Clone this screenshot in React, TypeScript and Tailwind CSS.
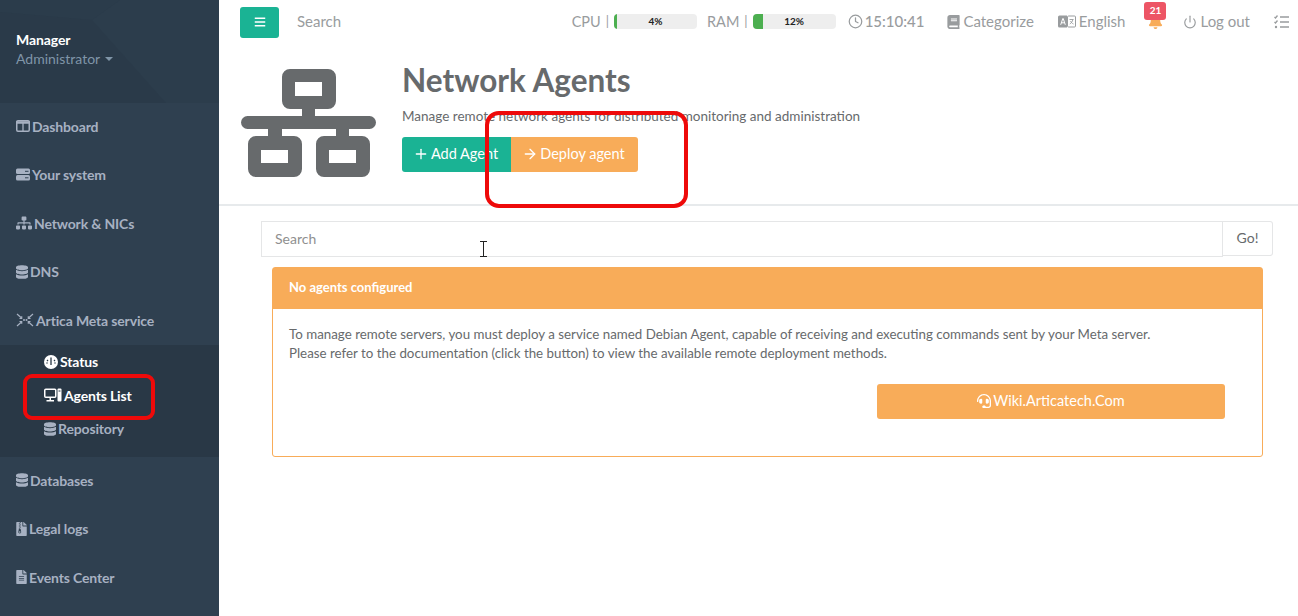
import React from "react";
import { FaDatabase, FaFileArchive, FaFileAlt, FaBook, FaBell, FaBars, FaSitemap, FaHeadset } from "react-icons/fa";
import { FiClock, FiPower } from "react-icons/fi";
import { LuPlus, LuArrowRight } from "react-icons/lu";

function NavItem({ icon, label }: { icon: React.ReactNode; label: string }) {
  return (
    <div className="h-[48.4px] pl-4 pb-[1.5px] flex items-center gap-[2px] text-[14px] font-bold text-[#a7b1c2] whitespace-nowrap tracking-[-0.15px]">
      {icon}
      <span>{label}</span>
    </div>
  );
}

function SubItem({ icon, label, active }: { icon: React.ReactNode; label: string; active?: boolean }) {
  return (
    <div className={`h-[33.5px] pl-[44px] flex items-center gap-[2px] text-[14px] font-bold whitespace-nowrap tracking-[-0.15px] ${active ? "text-white" : "text-[#a7b1c2]"}`}>
      {icon}
      <span>{label}</span>
    </div>
  );
}

function Meter({ value }: { value: number }) {
  return (
    <div className="relative w-[83px] h-[15px] rounded bg-[#eeeeee] overflow-hidden">
      <div className="absolute left-0 top-0 bottom-0 bg-[#4caf50]" style={{ width: `${value}%` }} />
      <div className="absolute inset-0 flex items-center justify-center text-[10px] font-bold text-[#222]">{value}%</div>
    </div>
  );
}

function NetworkIcon() {
  return (
    <svg width="135" height="108" viewBox="0 0 135 108" className="block" fill="#676a6c">
      <rect x="0" y="47" width="135" height="13" rx="6.5" />
      <rect x="61" y="38" width="13" height="10" />
      <rect x="27" y="59" width="14" height="10" />
      <rect x="95" y="59" width="13" height="10" />
      <path fillRule="evenodd" d="M49 0h38a8 8 0 0 1 8 8v24a8 8 0 0 1-8 8H49a8 8 0 0 1-8-8V8a8 8 0 0 1 8-8zM54 13v14h27V13z" />
      <path fillRule="evenodd" d="M15 67h38a8 8 0 0 1 8 8v25a8 8 0 0 1-8 8H15a8 8 0 0 1-8-8V75a8 8 0 0 1 8-8zM20 81v13h27V81z" />
      <path fillRule="evenodd" d="M83 67h38a8 8 0 0 1 8 8v25a8 8 0 0 1-8 8H83a8 8 0 0 1-8-8V75a8 8 0 0 1 8-8zM88 81v13h27V81z" />
    </svg>
  );
}

const DashIcon = () => (
  <svg width="14" height="12" viewBox="0 0 14 12" fill="none" stroke="currentColor" className="shrink-0">
    <rect x="0.75" y="0.75" width="12.5" height="10.5" rx="1.200" strokeWidth="1.500" />
    <path d="M0 2.500h14" strokeWidth="2.500" />
    <path d="M7 3v8" strokeWidth="1.300" />
  </svg>
);

const ServerIcon = () => (
  <svg width="14" height="13" viewBox="0 0 14 13" className="shrink-0">
    <rect x="0" y="0.500" width="14" height="5.500" rx="1.500" fill="currentColor" />
    <rect x="0" y="7" width="14" height="5.500" rx="1.500" fill="currentColor" />
    <path d="M9 3.300h3.500M9 9.800h3.500" stroke="#2f4050" strokeWidth="1" />
  </svg>
);

const MetaIcon = () => (
  <svg width="18" height="14" viewBox="0 0 18 14" fill="none" stroke="currentColor" strokeWidth="1.200" className="shrink-0">
    <path d="M1 1l4.500 4M1 13l4.500-4M17 1l-4.500 4M17 13l-4.500-4" />
    <path d="M3.500 5.500h2.200V3.300M3.500 8.500h2.200v2.200M14.500 5.500h-2.200V3.300M14.500 8.500h-2.200v2.200" />
    <circle cx="8" cy="7" r="1" fill="currentColor" stroke="none" />
    <circle cx="10.500" cy="7" r="1" fill="currentColor" stroke="none" />
  </svg>
);

const GaugeIcon = () => (
  <svg width="14" height="14" viewBox="0 0 14 14" className="shrink-0">
    <circle cx="7" cy="7" r="7" fill="currentColor" />
    <path d="M7 2.500v7.500M3 5l1 1M11 5l-1 1M2.500 8h1M10.500 8h1" stroke="#293846" strokeWidth="1.300" />
  </svg>
);

const AgentIcon = () => (
  <svg width="18" height="14" viewBox="0 0 18 14" fill="none" stroke="currentColor" strokeWidth="1.500" className="shrink-0">
    <rect x="0.750" y="1.250" width="11" height="8" rx="1" />
    <path d="M6.250 9.500v2.500M2.500 12.750h7.500" />
    <rect x="13.500" y="0.500" width="4" height="13" rx="1" fill="currentColor" stroke="none" />
    <path d="M14.500 3h2" stroke="#293846" strokeWidth="1" />
  </svg>
);

const TranslateIcon = () => (
  <svg width="18" height="13" viewBox="0 0 18 13" className="shrink-0">
    <path d="M1.500 0.500H9v12H1.500a1.500 1.500 0 0 1-1.500-1.500V2a1.500 1.500 0 0 1 1.500-1.500z" fill="currentColor" />
    <path d="M2.700 9.800L4.800 3.500h.4l2.100 6.300M3.500 7.800h3" stroke="#fff" strokeWidth="1" fill="none" />
    <rect x="9.500" y="1" width="8" height="11" rx="1" fill="#fff" stroke="currentColor" />
    <path d="M11.500 4.500h4M14.800 4.500c-.3 2-1.500 3.500-3 4.500M12.500 6c.6 1.300 1.500 2.300 3 3" stroke="currentColor" strokeWidth="0.900" fill="none" />
  </svg>
);

const TasksIcon = () => (
  <svg width="15" height="14" viewBox="0 0 15 14" fill="none" stroke="currentColor" strokeWidth="1.300" className="shrink-0">
    <path d="M6 2h9M6 7h9M6 12h9" />
    <path d="M0.500 2l1 1 2-2.500M0.500 7l1 1 2-2.500" />
    <circle cx="2" cy="12" r="1.200" fill="currentColor" stroke="none" />
  </svg>
);

export default function App() {
  return (
    <div className="relative flex w-[1298px] h-[616px] overflow-hidden bg-white text-[#676a6c] font-['Lato','Open_Sans',sans-serif]">
      <aside className="w-[219px] shrink-0 bg-[#2f4050] flex flex-col">
        <div className="relative h-[103px] bg-[#2a3a49] pl-4 pt-[30px] overflow-hidden">
          <svg className="absolute inset-0" width="219" height="103" viewBox="0 0 219 103">
            <polygon points="92,20 120,0 219,0 219,103 166,103" fill="#2c3d4c" />
            <polygon points="0,0 120,0 92,20 0,12" fill="#2b3c4b" />
          </svg>
          <div className="relative text-[14px] leading-[19px] font-bold text-white tracking-[-0.1px]">Manager</div>
          <div className="relative flex items-center gap-[5px] text-[14px] leading-[19px] text-[#8095a8]">
            Administrator
            <span className="mt-[1px] w-0 h-0 border-x-[4px] border-x-transparent border-t-[4px] border-t-[#8095a8]" />
          </div>
        </div>
        <nav>
          <NavItem icon={<DashIcon />} label="Dashboard" />
          <NavItem icon={<ServerIcon />} label="Your system" />
          <NavItem icon={<FaSitemap className="w-[16px] h-[14px]" />} label="Network & NICs" />
          <NavItem icon={<FaDatabase className="w-[12px] h-[14px]" />} label="DNS" />
          <NavItem icon={<MetaIcon />} label="Artica Meta service" />
          <div className="bg-[#293846] pb-[11.500px]">
            <SubItem active icon={<GaugeIcon />} label="Status" />
            <SubItem active icon={<AgentIcon />} label="Agents List" />
            <SubItem icon={<FaDatabase className="w-[12px] h-[14px]" />} label="Repository" />
          </div>
          <NavItem icon={<FaDatabase className="w-[12px] h-[14px]" />} label="Databases" />
          <NavItem icon={<FaFileArchive className="w-[11px] h-[14px]" />} label="Legal logs" />
          <NavItem icon={<FaFileAlt className="w-[11px] h-[14px]" />} label="Events Center" />
        </nav>
      </aside>

      <main className="flex-1 min-w-0">
        <header className="h-[43px] flex items-center pl-[21px] pr-[9px] text-[15px] text-[#999c9e] whitespace-nowrap">
          <div className="w-[39px] h-[31px] mt-[1px] rounded-[3px] bg-[#1ab394] flex items-center justify-center text-white">
            <FaBars className="w-[12px] h-[12px]" />
          </div>
          <div className="ml-[18px] text-[15px]">Search</div>
          <div className="ml-auto flex items-center">
            <span className="text-[14.500px]">CPU</span>
            <span className="ml-[5px] mr-[5px] text-[13px]">|</span>
            <Meter value={4} />
            <span className="ml-[10px] text-[14.500px]">RAM</span>
            <span className="ml-[5px] mr-[5px] text-[13px]">|</span>
            <Meter value={12} />
            <span className="ml-[12px] flex items-center gap-[2px] font-medium"><FiClock className="w-[15px] h-[15px]" />15:10:41</span>
            <span className="ml-[23px] flex items-center gap-[3px]"><FaBook className="w-[13px] h-[14px]" />Categorize</span>
            <span className="ml-[24px] flex items-center gap-[3px]"><TranslateIcon />English</span>
            <span className="relative ml-[22px] w-[16px] h-[16px] flex items-center justify-center">
              <FaBell className="w-[15px] h-[15px] text-[#f8ac59]" />
              <span className="absolute left-[-3px] top-[-12px] w-[22px] h-[18px] rounded-[3px] bg-[#ed5565] text-white text-[10px] font-bold flex items-center justify-center">21</span>
            </span>
            <span className="ml-[20px] flex items-center gap-[3px]"><FiPower className="w-[14px] h-[14px]" />Log out</span>
            <span className="ml-[24px]"><TasksIcon /></span>
          </div>
        </header>

        <section className="h-[163px] border-b-2 border-[#e7eaec] flex pl-[22px] pt-[26px]">
          <NetworkIcon />
          <div className="ml-[26px]">
            <h1 className="text-[31.500px] leading-[24px] mt-[-1px] font-bold">Network Agents</h1>
            <p className="mt-[14px] text-[13.500px] leading-[20px] whitespace-nowrap">Manage remote network agents for distributed monitoring and administration</p>
            <div className="flex mt-[11px] text-[14.500px] text-white">
              <button className="h-[35px] w-[109px] rounded-l-[3px] bg-[#1ab394] flex items-center justify-center gap-[2px] whitespace-nowrap pb-[2px] pr-[2px]"><LuPlus className="w-[16px] h-[16px]" />Add Agent</button>
              <button className="h-[35px] w-[127px] rounded-r-[3px] bg-[#f8ac59] flex items-center justify-center gap-[2px] whitespace-nowrap pb-[2px] pr-[2px]"><LuArrowRight className="w-[16px] h-[16px]" />Deploy agent</button>
            </div>
          </div>
        </section>

        <div className="flex ml-[42px] mr-[25px] mt-[15px] text-[14px]">
          <div className="flex-1 h-[36px] border border-[#e5e6e7] flex items-center pl-[13px] pb-[2px] text-[#8f8f8f]">Search</div>
          <div className="w-[50px] h-[35px] border border-l-0 border-[#e5e6e7] rounded-r-[3px] flex items-center justify-center pb-[2px]">Go!</div>
        </div>

        <div className="ml-[53px] mr-[35px] mt-[10px] h-[190px] rounded-[3px] border border-[#f8ac59]">
          <div className="h-[41px] bg-[#f8ac59] text-white text-[13px] font-bold flex items-center pl-4 pb-[1px]">No agents configured</div>
          <div className="pt-[16px] px-4 text-[13.330px] leading-[19px]">
            <p>To manage remote servers, you must deploy a service named Debian Agent, capable of receiving and executing commands sent by your Meta server.</p>
            <p>Please refer to the documentation (click the button) to view the available remote deployment methods.</p>
            <div className="flex justify-end mt-[21px] mr-[21px]">
              <button className="w-[348px] h-[35px] rounded-[3px] bg-[#f8ac59] text-white text-[14.500px] pb-[2px] flex items-center justify-center gap-[2px]"><FaHeadset className="w-[14px] h-[14px]" />Wiki.Articatech.Com</button>
            </div>
          </div>
        </div>
      </main>

      <div className="absolute left-[485px] top-[111px] w-[203px] h-[97px] rounded-[14px] border-[4px] border-[#ee0a0a]" />
      <div className="absolute left-[23px] top-[374px] w-[132px] h-[46px] rounded-[9px] border-[4px] border-[#ee0a0a]" />
      <svg className="absolute left-[479px] top-[241px]" width="9" height="16" viewBox="0 0 9 16" fill="none" stroke="#222" strokeWidth="1">
        <path d="M1 .5h7M1 15.500h7M4.500 .5v15" />
      </svg>
    </div>
  );
}
